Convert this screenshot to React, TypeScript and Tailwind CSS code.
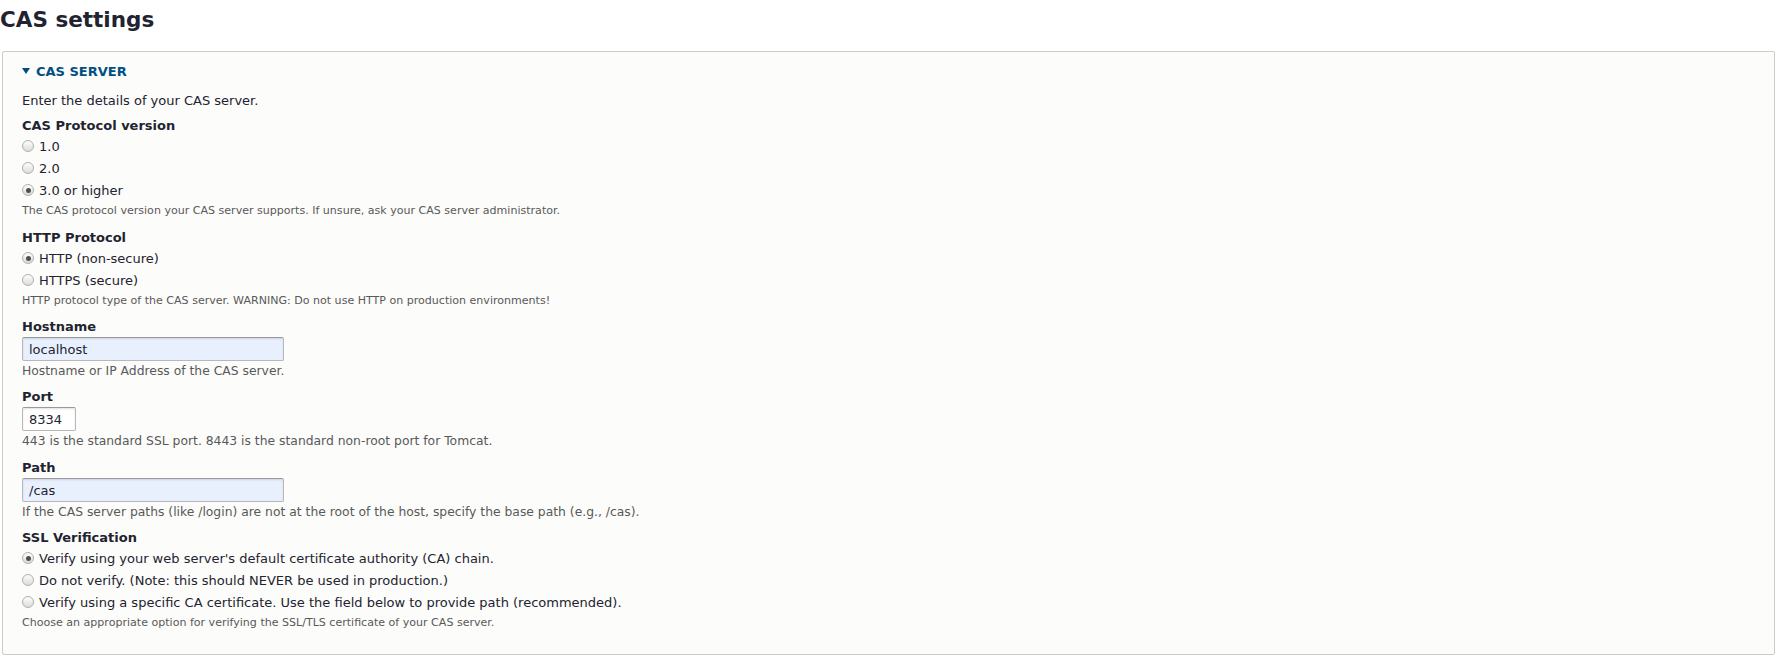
import React from "react";

const font = { fontFamily: '"DejaVu Sans", "Liberation Sans", sans-serif' };

function Radio({ label, checked }: { label: string; checked?: boolean }) {
  return (
    <div className="flex items-start h-[22px] leading-[22px] text-[13px] text-[#222330]">
      <span className="mt-[4px] mr-[5px] flex h-[12px] w-[12px] shrink-0 items-center justify-center rounded-full border border-[#b0b0b0] bg-linear-to-b from-[#fdfdfd] to-[#dcdcdc]">
        {checked && <span className="h-[5px] w-[5px] rounded-full bg-[#505050]" />}
      </span>
      <span>{label}</span>
    </div>
  );
}

function SmallDesc({ children }: { children: React.ReactNode }) {
  return <div className="mt-[1px] text-[11.05px] leading-[16px] text-[#595959]">{children}</div>;
}

function FieldDesc({ children }: { children: React.ReactNode }) {
  return <div className="text-[12.35px] leading-[20px] text-[#595959]">{children}</div>;
}

function Label({ children, className = "" }: { children: React.ReactNode; className?: string }) {
  return <div className={`text-[13px] leading-[20px] font-bold text-[#222330] ${className}`}>{children}</div>;
}

function TextInput({ value, width, autofill }: { value: string; width: string; autofill?: boolean }) {
  return (
    <input
      readOnly
      value={value}
      style={font}
      className={`block h-[24px] ${width} rounded-[2px] border border-[#b8b8b8] border-t-[#999] px-[6px] py-0 text-[13px] text-[#222330] shadow-[inset_0_1px_2px_rgba(0,0,0,0.12)] outline-none ${
        autofill ? "bg-[#e8f0fe]" : "bg-white"
      }`}
    />
  );
}

export default function App() {
  return (
    <div style={font} className="min-h-[658px] bg-white">
      {/* Page title */}
      <h1 className="pt-[5px] text-[21.5px] leading-[30px] font-bold text-[#222330]">CAS settings</h1>

      {/* CAS server details */}
      <div className="mt-[16px] ml-[2px] mr-[3px] rounded-[2px] border border-[#cccccc] bg-[#fcfcfa] pt-[10px] pb-[23px] pl-[19px]">
        <div className="flex items-center h-[20px] text-[13px] font-bold text-[#004f82]">
          <svg width="8" height="6" viewBox="0 0 8 6" className="-mt-[3px] mr-[6px]">
            <polygon points="0,0 8,0 4,6" fill="#004f82" />
          </svg>
          <span>CAS SERVER</span>
        </div>

        <div className="mt-[9px] text-[13px] leading-[20px] text-[#222330]">Enter the details of your CAS server.</div>

        <Label className="mt-[5px]">CAS Protocol version</Label>
        <Radio label="1.0" />
        <Radio label="2.0" />
        <Radio label="3.0 or higher" checked />
        <SmallDesc>The CAS protocol version your CAS server supports. If unsure, ask your CAS server administrator.</SmallDesc>

        <Label className="mt-[9px]">HTTP Protocol</Label>
        <Radio label="HTTP (non-secure)" checked />
        <Radio label="HTTPS (secure)" />
        <SmallDesc>HTTP protocol type of the CAS server. WARNING: Do not use HTTP on production environments!</SmallDesc>

        <Label className="mt-[8px]">Hostname</Label>
        <TextInput value="localhost" width="w-[262px]" autofill />
        <FieldDesc>Hostname or IP Address of the CAS server.</FieldDesc>

        <Label className="mt-[6px]">Port</Label>
        <TextInput value="8334" width="w-[54px]" />
        <FieldDesc>443 is the standard SSL port. 8443 is the standard non-root port for Tomcat.</FieldDesc>

        <Label className="mt-[7px]">Path</Label>
        <TextInput value="/cas" width="w-[262px]" autofill />
        <FieldDesc>If the CAS server paths (like /login) are not at the root of the host, specify the base path (e.g., /cas).</FieldDesc>

        <Label className="mt-[6px]">SSL Verification</Label>
        <Radio label="Verify using your web server's default certificate authority (CA) chain." checked />
        <Radio label="Do not verify. (Note: this should NEVER be used in production.)" />
        <Radio label="Verify using a specific CA certificate. Use the field below to provide path (recommended)." />
        <SmallDesc>Choose an appropriate option for verifying the SSL/TLS certificate of your CAS server.</SmallDesc>
      </div>
    </div>
  );
}
